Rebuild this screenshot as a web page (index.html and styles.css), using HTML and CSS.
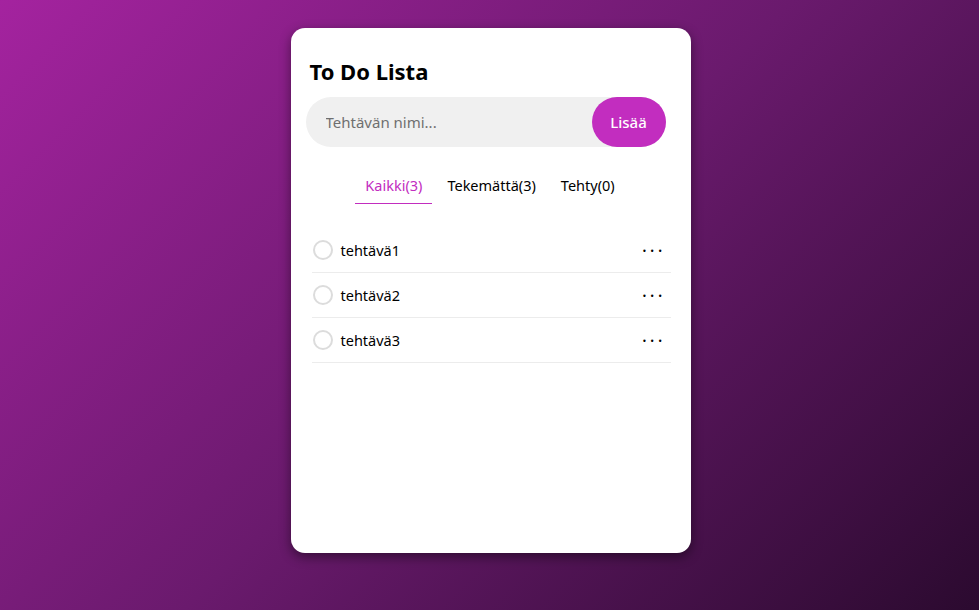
FILE: index.html
```html
<!DOCTYPE html>
<html lang="fi">
<head>
  <meta charset="UTF-8">
  <meta name="viewport" content="width=device-width, initial-scale=1.0">
  <title>To Do Lista</title>
  <link rel="stylesheet" href="styles.css">
</head>
<body>
  <div class="card">
    <h1>To Do Lista</h1>
    <div class="add-row">
      <input type="text" class="task-input" placeholder="Tehtävän nimi...">
      <button class="add-btn">Lisää</button>
    </div>

    <div class="tabs">
      <span class="tab active">Kaikki(3)</span>
      <span class="tab">Tekemättä(3)</span>
      <span class="tab">Tehty(0)</span>
    </div>

    <ul class="task-list">
      <li class="task">
        <span class="check"></span>
        <span class="task-name">tehtävä1</span>
        <span class="menu">···</span>
      </li>
      <li class="task">
        <span class="check"></span>
        <span class="task-name">tehtävä2</span>
        <span class="menu">···</span>
      </li>
      <li class="task">
        <span class="check"></span>
        <span class="task-name">tehtävä3</span>
        <span class="menu">···</span>
      </li>
    </ul>
  </div>
</body>
</html>
```

FILE: styles.css
```css
* {
  box-sizing: border-box;
}
body {
  margin: 0;
  height: 610px;
  font-family: "Noto Sans", Arial, sans-serif;
  background: linear-gradient(135deg, #a4239f 0%, #6a1a6d 50%, #2b0a2f 100%);
  display: flex;
  justify-content: center;
  padding-top: 28px;
  padding-left: 2px;
}
.card {
  width: 400px;
  height: 525px;
  background-color: #fff;
  border-radius: 14px;
  box-shadow: 0 4px 12px rgba(0, 0, 0, 0.45);
  padding: 27px 25px 20px 15px;
}
h1 {
  margin: 0 0 10px 4px;
  font-size: 22px;
  font-weight: 700;
  color: #000;
  line-height: 32px;
}
.add-row {
  display: flex;
  height: 50px;
  background-color: #f0f0f0;
  border-radius: 25px;
}
.task-input {
  flex: 1;
  border: none;
  background: transparent;
  padding: 0 20px;
  font-family: inherit;
  font-size: 15px;
  outline: none;
  color: #333;
}
.task-input::placeholder {
  color: #6f6f6f;
}
.add-btn {
  width: 74px;
  border: none;
  border-radius: 25px;
  background-color: #c22dbf;
  color: #fff;
  font-family: inherit;
  font-size: 15px;
  font-weight: 500;
}
.tabs {
  display: flex;
  justify-content: center;
  gap: 5px;
  margin-top: 24px;
  padding-left: 9px;
}
.tab {
  padding: 4px 10px 8px;
  font-size: 14.5px;
  color: #000;
  border-bottom: 1px solid transparent;
}
.tab.active {
  color: #c22dbf;
  border-bottom-color: #c22dbf;
}
.task-list {
  list-style: none;
  margin: 24px 0 0 6px;
  padding: 0;
  width: 359px;
}
.task {
  display: flex;
  align-items: center;
  height: 45px;
  border-bottom: 1px solid #ececec;
  padding-left: 1px;
}
.check {
  width: 20px;
  height: 20px;
  border: 2px solid #dcdcdc;
  border-radius: 50%;
  margin-right: 8px;
}
.task-name {
  flex: 1;
  font-size: 14.5px;
  color: #000;
}
.menu {
  margin-right: 5px;
  font-size: 18px;
  letter-spacing: 3px;
  color: #000;
}
```
